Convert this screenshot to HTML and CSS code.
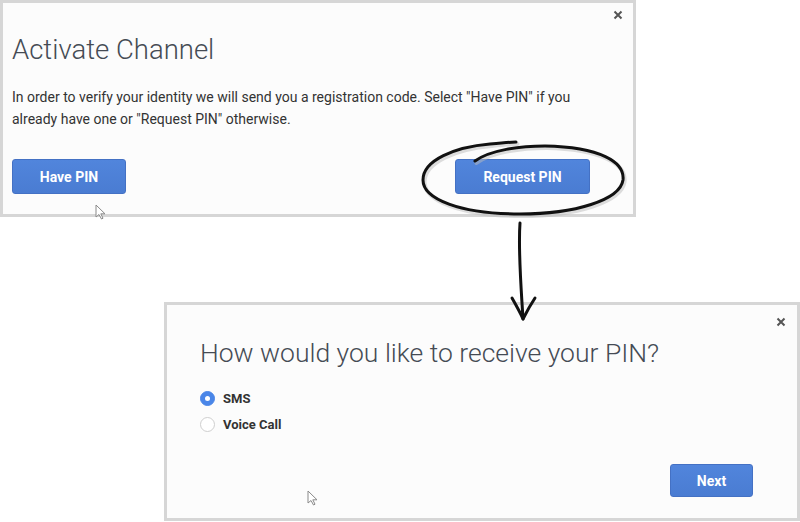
FILE: index.html
```html
<!DOCTYPE html>
<html lang="en">
<head>
<meta charset="utf-8">
<title>Activate Channel</title>
<link rel="stylesheet" href="styles.css">
</head>
<body>
<div class="stage">
  <section class="dialog dialog-activate">
    <button class="close" aria-label="Close">
      <svg viewBox="0 0 10 10" width="10" height="10"><path d="M1.5 1.5 L8.5 8.5 M8.5 1.5 L1.5 8.5" stroke="#555" stroke-width="2" fill="none"/></svg>
    </button>
    <h1 class="title">Activate Channel</h1>
    <p class="text">In order to verify your identity we will send you a registration code. Select "Have PIN" if you already have one or "Request PIN" otherwise.</p>
    <div class="actions">
      <button class="btn btn-have">Have PIN</button>
      <button class="btn btn-request">Request PIN</button>
    </div>
    <svg class="cursor cursor-top" viewBox="0 0 12 16" width="12" height="16"><path d="M1 1 L1 13 L4 10.5 L6.5 15 L8 14.2 L5.8 9.8 L10 9.8 Z" fill="#fff" stroke="#8a8a8a" stroke-width="1" stroke-linejoin="round"/></svg>
  </section>

  <section class="dialog dialog-pin">
    <button class="close" aria-label="Close">
      <svg viewBox="0 0 10 10" width="10" height="10"><path d="M1.5 1.5 L8.5 8.5 M8.5 1.5 L1.5 8.5" stroke="#555" stroke-width="2" fill="none"/></svg>
    </button>
    <h2 class="title title-pin">How would you like to receive your PIN?</h2>
    <div class="options">
      <label class="option"><span class="radio radio-on"></span><span>SMS</span></label>
      <label class="option"><span class="radio"></span><span>Voice Call</span></label>
    </div>
    <div class="actions actions-end">
      <button class="btn btn-next">Next</button>
    </div>
    <svg class="cursor cursor-bottom" viewBox="0 0 12 16" width="12" height="16"><path d="M1 1 L1 13 L4 10.5 L6.5 15 L8 14.2 L5.8 9.8 L10 9.8 Z" fill="#fff" stroke="#8a8a8a" stroke-width="1" stroke-linejoin="round"/></svg>
  </section>

  <svg class="annotation" viewBox="0 0 800 522" width="800" height="522">
    <g fill="none" stroke="#bbb" stroke-width="4" stroke-linecap="round" opacity="0.5" transform="translate(1.5,2)">
      <path d="M475 161 C490 150 520 146 545 146 C600 147 625 162 623 180 C620 200 575 214 520 214 C460 214 423 199 423 180 C423 160 455 147 490 144 C500 143 510 142 516 142"/>
    </g>
    <g fill="none" stroke="#111" stroke-width="3" stroke-linecap="round" stroke-linejoin="round">
      <path d="M475 161 C490 150 520 146 545 146 C600 147 625 162 623 180 C620 200 575 214 520 214 C460 214 423 199 423 180 C423 160 455 147 490 144 C500 143 510 142 516 142"/>
      <path d="M520 223 C518 250 521 285 523 319"/>
      <path d="M512 298 C516 305 520 312 523 319 C527 311 531 304 535 298"/>
    </g>
  </svg>
</div>
</body>
</html>
```

FILE: styles.css
```css
* {
  box-sizing: border-box;
}

html, body {
  margin: 0;
  padding: 0;
  background: #ffffff;
}

body {
  font-family: Roboto, "Liberation Sans", Arial, sans-serif;
  color: #333;
}

.stage {
  position: relative;
  width: 800px;
  height: 522px;
  overflow: hidden;
}

.dialog {
  position: relative;
  background: #fcfcfc;
  border: 3px solid #d6d6d6;
  display: flex;
  flex-direction: column;
}

.dialog-activate {
  width: 636px;
  height: 217px;
  padding: 30px 43px 0 9px;
}

.dialog-pin {
  width: 636px;
  height: 219px;
  margin: 85px 0 0 164px;
  padding: 31px 44px 21px 33px;
}

.close {
  position: absolute;
  top: 7px;
  right: 10px;
  width: 10px;
  height: 10px;
  padding: 0;
  border: 0;
  background: none;
  display: flex;
}

.dialog-pin .close {
  top: 12px;
  right: 11px;
}

.title {
  margin: 0;
  font-size: 27.5px;
  line-height: 33px;
  font-weight: 300;
  color: #454b54;
}

.title-pin {
  font-size: 26.5px;
  line-height: 33px;
}

.text {
  margin: 20px 0 0 0;
  font-size: 14px;
  line-height: 22px;
  color: #333;
}

.actions {
  display: flex;
  justify-content: space-between;
  margin-top: 29px;
  padding-left: 0;
}

.actions-end {
  justify-content: flex-end;
  margin-top: auto;
}

.btn {
  height: 35px;
  border: 1px solid #4471c4;
  border-radius: 3px;
  background: linear-gradient(#5185dc, #4a7cd2);
  color: #fff;
  font-family: Roboto, "Liberation Sans", Arial, sans-serif;
  font-size: 14px;
  font-weight: 700;
  padding: 0;
}

.btn-have {
  width: 114px;
}

.btn-request {
  width: 135px;
}

.btn-next {
  width: 83px;
  height: 33px;
}

.options {
  margin-top: 16px;
  display: flex;
  flex-direction: column;
}

.option {
  display: flex;
  align-items: center;
  gap: 8px;
  height: 26px;
  font-size: 13px;
  font-weight: 700;
  color: #333;
}

.radio {
  width: 15px;
  height: 15px;
  border-radius: 50%;
  border: 1px solid #cfcfcf;
  background: #fff;
  flex: none;
  display: flex;
  align-items: center;
  justify-content: center;
}

.radio-on {
  border-color: #4a86e8;
  background: #4a86e8;
}

.radio-on::after {
  content: "";
  width: 5px;
  height: 5px;
  border-radius: 50%;
  background: #fff;
}

.cursor {
  position: absolute;
}

.cursor-top {
  left: 92px;
  top: 201px;
}

.cursor-bottom {
  left: 140px;
  top: 185px;
}

.annotation {
  position: absolute;
  left: 0;
  top: 0;
  pointer-events: none;
}
```
